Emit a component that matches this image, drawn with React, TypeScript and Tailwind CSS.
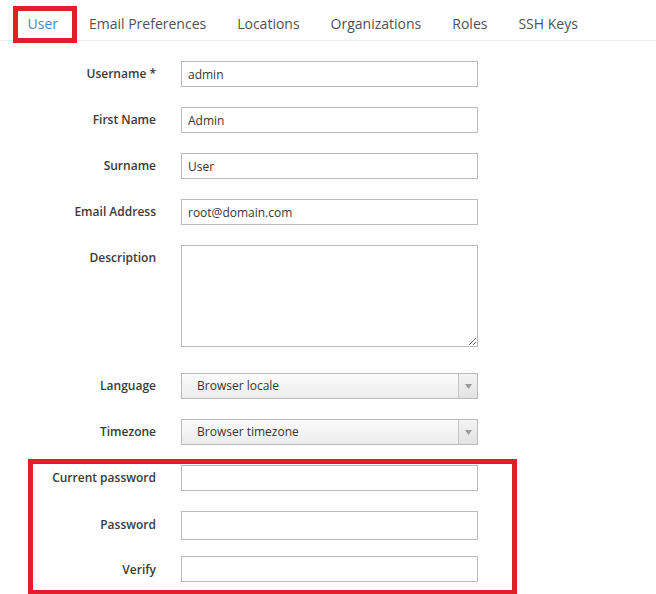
export default function App() {
  const tabs = ['User', 'Email Preferences', 'Locations', 'Organizations', 'Roles', 'SSH Keys'];

  const inputCls =
    'ml-[25px] w-[297px] h-[26px] border border-[#bababa] bg-white px-[6px] text-[12px] text-[#363636] outline-none';
  const labelCls = 'w-[156px] text-right font-semibold text-[#3a3a3a] leading-[26px]';

  return (
    <div className="w-[656px] h-[594px] bg-white overflow-hidden" style={{ fontFamily: '"Open Sans", "Noto Sans", sans-serif' }}>
      {/* Tabs */}
      <ul className="flex pl-[12px] border-b border-[#ececec] text-[14px]">
        {tabs.map((tab, i) => (
          <li
            key={tab}
            className={`relative h-[40px] flex items-center pt-[6px] px-[15.5px] ${i === 0 ? 'text-[#4d87b7]' : 'text-[#4d5258]'}`}
          >
            {tab}
            {i === 0 && (
              <span className="absolute left-[1px] -right-[4px] top-[6px] -bottom-[3px] border-[5px] border-[#e21e26]" />
            )}
          </li>
        ))}
      </ul>

      {/* Form */}
      <div className="mt-[20px] text-[12px] text-[#363636]">
        <div className="flex items-start mb-[20px]">
          <label className={labelCls}>Username *</label>
          <input className={inputCls} value="admin" readOnly />
        </div>
        <div className="flex items-start mb-[20px]">
          <label className={labelCls}>First Name</label>
          <input className={inputCls} value="Admin" readOnly />
        </div>
        <div className="flex items-start mb-[20px]">
          <label className={labelCls}>Surname</label>
          <input className={inputCls} value="User" readOnly />
        </div>
        <div className="flex items-start mb-[20px]">
          <label className={labelCls}>Email Address</label>
          <input className={inputCls} value="root@domain.com" readOnly />
        </div>
        <div className="flex items-start mb-[26px]">
          <label className={labelCls}>Description</label>
          <textarea className="ml-[25px] w-[297px] h-[102px] border border-[#bababa] bg-white outline-none block" />
        </div>

        {[
          ['Language', 'Browser locale'],
          ['Timezone', 'Browser timezone'],
        ].map(([label, value]) => (
          <div key={label} className="flex items-start mb-[20px]">
            <label className={labelCls}>{label}</label>
            <div className="ml-[25px] w-[297px] h-[26px] flex border border-[#bababa] bg-gradient-to-b from-[#fcfcfc] to-[#ececec]">
              <span className="flex-1 pl-[15px] leading-[24px]">{value}</span>
              <span className="w-[19px] flex items-center justify-center border-l border-[#c4c4c4] bg-gradient-to-b from-[#f4f4f4] to-[#e2e2e2]">
                <svg width="7" height="5" viewBox="0 0 7 5">
                  <path d="M0 0h7L3.5 5z" fill="#9a9a9a" />
                </svg>
              </span>
            </div>
          </div>
        ))}

        {/* Password group */}
        <div className="relative">
          <div className="flex items-start mb-[20px]">
            <label className={labelCls}>Current password</label>
            <input type="password" className={inputCls} readOnly />
          </div>
          <div className="flex items-start mb-[16px]">
            <label className="w-[156px] text-right font-semibold text-[#3a3a3a] leading-[27px]">Password</label>
            <input type="password" className="ml-[25px] w-[297px] h-[29px] border border-[#bababa] bg-white outline-none" readOnly />
          </div>
          <div className="flex items-start">
            <label className="w-[156px] text-right font-semibold text-[#3a3a3a] leading-[28px]">Verify</label>
            <input type="password" className={inputCls} readOnly />
          </div>
          <span className="absolute left-[28px] w-[489px] -top-[6px] -bottom-[11px] border-[5px] border-[#e21e26] pointer-events-none" />
        </div>
      </div>
    </div>
  );
}
